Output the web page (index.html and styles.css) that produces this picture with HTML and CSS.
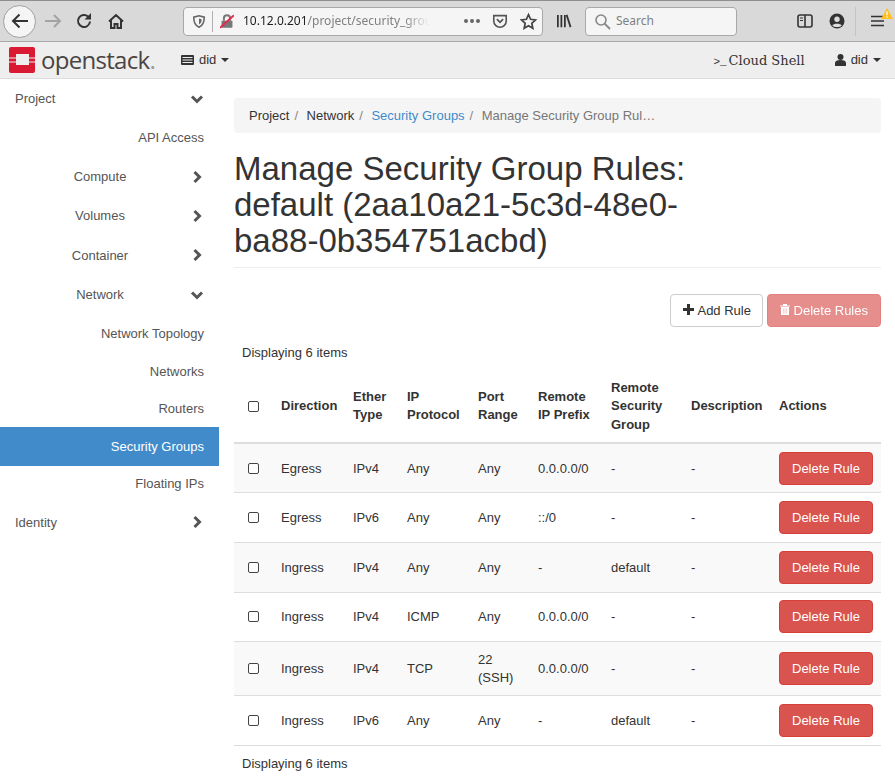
FILE: index.html
```html
<!DOCTYPE html>
<html lang="en">
<head>
    <meta charset="UTF-8">
    <meta name="viewport" content="width=device-width, initial-scale=1.0">
    <title>Manage Security Group Rules - OpenStack Dashboard</title>
    <link rel="stylesheet" href="styles.css">
</head>
<body>
    <div class="browser-bar">
        <div class="back-button">
            <svg width="20" height="20" viewBox="0 0 20 20"><path d="M18 10H3M9.500 3.500 3 10l6.500 6.500" fill="none" stroke="#333" stroke-width="2"/></svg>
        </div>
        <svg class="tool forward" width="18" height="18" viewBox="0 0 18 18"><path d="M1 9h15M10 3l6 6-6 6" fill="none" stroke="#a3a3a3" stroke-width="2"/></svg>
        <svg class="tool reload" width="18" height="18" viewBox="0 0 18 18"><path d="M15 9.500A6 6 0 1 1 13 4.500" fill="none" stroke="#333" stroke-width="2"/><path d="M16 1v6.500h-6.500z" fill="#333"/></svg>
        <svg class="tool home" width="18" height="18" viewBox="0 0 18 18"><path d="M2 9.500 9 3l7 6.500M4 8v8h3.500v-4h3v4H14V8" fill="none" stroke="#333" stroke-width="2"/></svg>
        <div class="url-box">
            <svg class="shield" width="14" height="15" viewBox="0 0 16 16"><path d="M8 1.500 14 3c0 6-1.500 9.500-6 11.500C3.500 12.500 2 9 2 3z" fill="none" stroke="#666" stroke-width="1.800"/><path d="M8 4.500 11 5.300c0 3-.8 4.700-3 6z" fill="#666"/></svg>
            <span class="url-sep"></span>
            <svg class="lock" width="14" height="15" viewBox="0 0 18 18"><rect x="2" y="8" width="14" height="9" rx="1" fill="#777"/><path d="M5 8V5a4 4 0 0 1 8 0v3" fill="none" stroke="#777" stroke-width="2.500"/><path d="M0 17 18 1" stroke="#e8274b" stroke-width="2.500"/></svg>
            <span class="url-text"><span class="url-host">10.12.0.201</span>/project/security_grou</span>
            <svg class="url-dots" width="16" height="4" viewBox="0 0 16 4"><circle cx="2" cy="2" r="2" fill="#666"/><circle cx="8" cy="2" r="2" fill="#666"/><circle cx="14" cy="2" r="2" fill="#666"/></svg>
            <svg class="pocket" width="16" height="16" viewBox="0 0 18 18"><path d="M2 3h14v6a7 7 0 0 1-14 0z" fill="none" stroke="#555" stroke-width="1.800"/><path d="M5.500 7 9 10.500 12.500 7" fill="none" stroke="#555" stroke-width="2"/></svg>
            <svg class="star" width="17" height="17" viewBox="0 0 18 18"><path d="M9 1.800 11.200 6.700l5.300.6-4 3.600 1.100 5.300L9 13.500l-4.600 2.700 1.100-5.300-4-3.600 5.300-.6z" fill="none" stroke="#444" stroke-width="1.800"/></svg>
        </div>
        <svg class="library" width="16" height="14" viewBox="0 0 17 16"><path d="M1.500 1v14M5.500 1v14M9.500 1v14M11.500 1l4.500 14" fill="none" stroke="#333" stroke-width="2"/></svg>
        <div class="search-box">
            <svg width="17" height="17" viewBox="0 0 17 17"><circle cx="7" cy="7" r="5" fill="none" stroke="#888" stroke-width="1.600"/><path d="m10.500 10.500 5.500 5.500" stroke="#888" stroke-width="1.800"/></svg>
            <span>Search</span>
        </div>
        <svg class="sidebar-toggle" width="16" height="14" viewBox="0 0 16 14"><rect x="1" y="1" width="14" height="12" rx="2" fill="none" stroke="#333" stroke-width="1.600"/><path d="M8 1v12" stroke="#333" stroke-width="1.600"/><path d="M3 4h3M3 6.500h3" stroke="#333"/></svg>
        <svg class="account" width="16" height="16" viewBox="0 0 16 16"><circle cx="8" cy="8" r="7.500" fill="#333"/><circle cx="8" cy="6.300" r="2.700" fill="#ddd"/><path d="M3.300 12.500c1-2.500 8.400-2.500 9.400 0C11 14.500 5 14.500 3.300 12.500z" fill="#ddd"/></svg>
        <span class="bar-sep"></span>
        <div class="menu-button">
            <svg width="13" height="12" viewBox="0 0 13 12"><path d="M0 1.500h13M0 6h13M0 10.500h13" stroke="#333" stroke-width="1.600"/></svg>
            <svg class="warn" width="12" height="11" viewBox="0 0 13 12"><path d="M6.500 0 13 12H0z" fill="#ffbf1c"/><path d="M6.500 3.500v4.500M6.500 9v1.500" stroke="#fff" stroke-width="1.400"/></svg>
        </div>
    </div>

    <nav class="topbar">
        <div class="brand">
            <svg width="26" height="26" viewBox="0 0 26 26"><path d="M2 0h22a2 2 0 0 1 2 2v8.500h-6V7H7v3.500H0V2a2 2 0 0 1 2-2zM0 11.500h7v3H0zM20 11.500h6v3h-6zM0 15.500h7V18h13v-2.500h6V24a2 2 0 0 1-2 2H2a2 2 0 0 1-2-2z" fill="#da1a32"/></svg>
            <span class="brand-name">openstack<span class="brand-dot">.</span></span>
        </div>
        <div class="project-picker">
            <svg width="13" height="10" viewBox="0 0 13 10"><rect width="13" height="10" rx="1" fill="#333"/><path d="M1.500 2.500h10M1.500 5h10M1.500 7.500h10" stroke="#eee"/></svg>
            <span>did</span>
            <span class="caret"></span>
        </div>
        <div class="cloud-shell"><span class="prompt">&gt;_</span>Cloud Shell</div>
        <div class="user-menu">
            <svg width="11" height="12" viewBox="0 0 11 12"><circle cx="5.500" cy="3" r="3" fill="#333"/><path d="M0 12V9c0-2 2-3 5.500-3S11 7 11 9v3z" fill="#333"/></svg>
            <span>did</span>
            <span class="caret"></span>
        </div>
    </nav>

    <div class="layout">
        <aside class="sidebar">
            <a class="nav-row nav-top h39">Project
                <svg class="chev" width="14" height="14" viewBox="0 0 14 14"><path d="M2 4.500l5 5 5-5" fill="none" stroke="#555" stroke-width="3"/></svg>
            </a>
            <a class="nav-row nav-link h39">API Access</a>
            <a class="nav-row nav-group h39"><span>Compute</span>
                <svg class="chev" width="14" height="14" viewBox="0 0 14 14"><path d="M4.500 2l5 5-5 5" fill="none" stroke="#555" stroke-width="3"/></svg>
            </a>
            <a class="nav-row nav-group h39"><span>Volumes</span>
                <svg class="chev" width="14" height="14" viewBox="0 0 14 14"><path d="M4.500 2l5 5-5 5" fill="none" stroke="#555" stroke-width="3"/></svg>
            </a>
            <a class="nav-row nav-group h40"><span>Container</span>
                <svg class="chev" width="14" height="14" viewBox="0 0 14 14"><path d="M4.500 2l5 5-5 5" fill="none" stroke="#555" stroke-width="3"/></svg>
            </a>
            <a class="nav-row nav-group h39"><span>Network</span>
                <svg class="chev" width="14" height="14" viewBox="0 0 14 14"><path d="M2 4.500l5 5 5-5" fill="none" stroke="#555" stroke-width="3"/></svg>
            </a>
            <a class="nav-row nav-link h39">Network Topology</a>
            <a class="nav-row nav-link h37">Networks</a>
            <a class="nav-row nav-link h37">Routers</a>
            <a class="nav-row nav-link h39 active">Security Groups</a>
            <a class="nav-row nav-link h36">Floating IPs</a>
            <a class="nav-row nav-top h40">Identity
                <svg class="chev" width="14" height="14" viewBox="0 0 14 14"><path d="M4.500 2l5 5-5 5" fill="none" stroke="#555" stroke-width="3"/></svg>
            </a>
        </aside>

        <main class="content">
            <ol class="breadcrumb">
                <li>Project</li>
                <li>Network</li>
                <li class="crumb-link">Security Groups</li>
                <li class="crumb-current">Manage Security Group Rul…</li>
            </ol>
            <h1 class="page-title">Manage Security Group Rules: default (2aa10a21-5c3d-48e0-ba88-0b354751acbd)</h1>

            <div class="table-actions">
                <button class="btn btn-default">
                    <svg width="11" height="11" viewBox="0 0 11 11"><path d="M4 0h3v4h4v3H7v4H4V7H0V4h4z" fill="#333"/></svg>
                    Add Rule
                </button>
                <button class="btn btn-danger btn-disabled">
                    <svg width="10" height="11" viewBox="0 0 10 11"><path d="M0 1.500h10v1H0zM3 0h4v1.500H3zM1 3h8v8H1z" fill="#fff"/><path d="M3.500 4.500v5M5 4.500v5M6.500 4.500v5" stroke="#e68a87" stroke-width=".6"/></svg>
                    Delete Rules
                </button>
            </div>

            <table class="rules">
                <colgroup>
                    <col class="col-check">
                    <col class="col-dir">
                    <col class="col-ether">
                    <col class="col-proto">
                    <col class="col-port">
                    <col class="col-prefix">
                    <col class="col-group">
                    <col class="col-desc">
                    <col class="col-act">
                </colgroup>
                <thead>
                    <tr class="count-row"><td colspan="9">Displaying 6 items</td></tr>
                    <tr class="head-row">
                        <th><span class="check"></span></th>
                        <th>Direction</th>
                        <th>Ether Type</th>
                        <th>IP Protocol</th>
                        <th>Port Range</th>
                        <th>Remote IP Prefix</th>
                        <th>Remote Security Group</th>
                        <th>Description</th>
                        <th>Actions</th>
                    </tr>
                </thead>
                <tbody>
                    <tr class="r49"><td><span class="check"></span></td><td>Egress</td><td>IPv4</td><td>Any</td><td>Any</td><td>0.0.0.0/0</td><td>-</td><td>-</td><td><button class="btn btn-danger">Delete Rule</button></td></tr>
                    <tr class="r50"><td><span class="check"></span></td><td>Egress</td><td>IPv6</td><td>Any</td><td>Any</td><td>::/0</td><td>-</td><td>-</td><td><button class="btn btn-danger">Delete Rule</button></td></tr>
                    <tr class="r50"><td><span class="check"></span></td><td>Ingress</td><td>IPv4</td><td>Any</td><td>Any</td><td>-</td><td>default</td><td>-</td><td><button class="btn btn-danger">Delete Rule</button></td></tr>
                    <tr class="r49"><td><span class="check"></span></td><td>Ingress</td><td>IPv4</td><td>ICMP</td><td>Any</td><td>0.0.0.0/0</td><td>-</td><td>-</td><td><button class="btn btn-danger">Delete Rule</button></td></tr>
                    <tr class="r54"><td><span class="check"></span></td><td>Ingress</td><td>IPv4</td><td>TCP</td><td>22 (SSH)</td><td>0.0.0.0/0</td><td>-</td><td>-</td><td><button class="btn btn-danger">Delete Rule</button></td></tr>
                    <tr class="r50"><td><span class="check"></span></td><td>Ingress</td><td>IPv6</td><td>Any</td><td>Any</td><td>-</td><td>default</td><td>-</td><td><button class="btn btn-danger">Delete Rule</button></td></tr>
                </tbody>
                <tfoot>
                    <tr class="count-row"><td colspan="9">Displaying 6 items</td></tr>
                </tfoot>
            </table>
        </main>
    </div>
</body>
</html>
```

FILE: styles.css
```css
:root {
    --text-color: #333;
    --muted-color: #555;
    --danger-color: #d9534f;
    --link-color: #428bca;
}

html, body {
    height: 779px;
    overflow: hidden;
}

body {
    margin: 0;
    font-family: 'Liberation Sans', Arial, sans-serif;
    font-size: 13px;
    line-height: 1.42857;
    color: var(--text-color);
    background: #fff;
}

/* browser toolbar */
.browser-bar {
    height: 42px;
    box-sizing: border-box;
    display: flex;
    align-items: center;
    background: #d9d9d9;
    border-top: 1px solid #8f8f8f;
    border-bottom: 1px solid #a8a8a8;
    font-family: 'Noto Sans', sans-serif;
}

.back-button {
    width: 31px;
    height: 31px;
    margin-left: 3px;
    display: flex;
    align-items: center;
    justify-content: center;
    background: #f5f5f5;
    border: 1px solid #a0a0a0;
    border-radius: 50%;
}

.tool {
    flex: none;
}

.forward {
    margin-left: 8px;
}

.reload {
    margin-left: 13px;
}

.home {
    margin-left: 14px;
}

.url-box {
    width: 360px;
    height: 29px;
    margin-left: 58px;
    flex: none;
    box-sizing: border-box;
    display: flex;
    align-items: center;
    background: #f5f5f5;
    border: 1px solid #a8a8a8;
    border-radius: 4px;
    font-size: 12px;
}

.shield {
    margin-left: 8px;
}

.url-sep {
    width: 1px;
    height: 21px;
    margin-left: 6px;
    background: #b0b0b0;
}

.lock {
    margin-left: 7px;
}

.url-text {
    width: 192px;
    margin-left: 9px;
    white-space: nowrap;
    color: #808080;
    -webkit-mask-image: linear-gradient(to right, #000 84%, transparent 97%);
    mask-image: linear-gradient(to right, #000 84%, transparent 97%);
}

.url-host {
    color: #222;
}

.url-dots {
    margin-left: 29px;
}

.pocket {
    margin-left: 12px;
}

.star {
    margin-left: 12px;
}

.library {
    margin-left: 13px;
    flex: none;
}

.search-box {
    width: 152px;
    height: 29px;
    margin-left: 13px;
    flex: none;
    box-sizing: border-box;
    display: flex;
    align-items: center;
    gap: 5px;
    padding-left: 8px;
    background: #f5f5f5;
    border: 1px solid #a8a8a8;
    border-radius: 4px;
    font-size: 12px;
    color: #808080;
}

.sidebar-toggle {
    margin-left: 60px;
    flex: none;
}

.account {
    margin-left: 16px;
    flex: none;
}

.bar-sep {
    width: 1px;
    height: 29px;
    margin-left: 10px;
    background: #c4c4c4;
}

.menu-button {
    position: relative;
    margin-left: 15px;
    display: flex;
}

.warn {
    position: absolute;
    top: -7px;
    left: 10px;
}

/* openstack navbar */
.topbar {
    height: 37px;
    box-sizing: border-box;
    display: flex;
    align-items: center;
    background: #eee;
    border-bottom: 1px solid #ddd;
}

.brand {
    display: flex;
    align-items: center;
    margin-left: 9px;
    width: 172px;
    flex: none;
}

.brand-name {
    margin-left: 6px;
    font-family: 'Open Sans', sans-serif;
    font-size: 24px;
    font-weight: 500;
    line-height: 26px;
    letter-spacing: -0.7px;
    color: #4a4443;
}

.brand-dot {
    color: #999;
}

.project-picker, .user-menu {
    display: flex;
    align-items: center;
    gap: 5px;
}

.caret {
    width: 0;
    height: 0;
    border-top: 4px solid #333;
    border-left: 4px solid transparent;
    border-right: 4px solid transparent;
}

.cloud-shell {
    margin-left: auto;
    margin-top: 2px;
    font-family: 'DejaVu Serif', 'Liberation Serif', serif;
    font-size: 13px;
    color: #333;
}

.prompt {
    margin-right: 2px;
    font-family: 'Liberation Mono', monospace;
    font-size: 11px;
}

.user-menu {
    margin-left: 30px;
    margin-right: 14px;
}

/* sidebar */
.layout {
    display: flex;
}

.sidebar {
    width: 219px;
    flex: none;
}

.nav-row {
    display: flex;
    align-items: center;
    justify-content: flex-end;
    box-sizing: border-box;
    padding-top: 2px;
    padding-right: 15px;
    color: var(--muted-color);
}

.h36 { height: 36px; padding-top: 0; }
.h37 { height: 37px; }
.h39 { height: 39px; }
.h40 { height: 40px; }

.nav-top {
    justify-content: space-between;
    padding-left: 15px;
}

.nav-group span {
    width: 110px;
    text-align: center;
    margin-right: 27px;
}

.chev {
    flex: none;
    margin-top: -2px;
}

.nav-group .chev {
    margin-left: 8px;
}

.active {
    background: var(--link-color);
    color: #fff;
}

/* main content */
.content {
    flex: 1;
    min-width: 0;
    padding: 19px 14px 0 15px;
}

.breadcrumb {
    display: flex;
    margin: 0;
    padding: 9px 15px 7px;
    height: 35px;
    box-sizing: border-box;
    list-style: none;
    align-items: center;
    background: #f5f5f5;
    border-radius: 4px;
}

.breadcrumb li + li::before {
    content: "/";
    padding: 0 8.500px 0 5px;
    color: #888;
}

.crumb-link {
    color: var(--link-color);
}

.crumb-current {
    color: #777;
}

.page-title {
    margin: 18px 0 0;
    padding: 0 147px 8px 0;
    border-bottom: 1px solid #eee;
    font-size: 33px;
    font-weight: 400;
    line-height: 36px;
    color: var(--text-color);
}

.table-actions {
    display: flex;
    justify-content: flex-end;
    gap: 4px;
    margin-top: 26px;
}

.btn {
    height: 33px;
    padding: 0 12px;
    box-sizing: border-box;
    font-family: inherit;
    font-size: 13px;
    white-space: nowrap;
    border: 1px solid transparent;
    border-radius: 4px;
}

.btn-default {
    padding-right: 11px;
    background: #fff;
    border-color: #ccc;
    color: var(--text-color);
}

.btn-default svg {
    margin-right: 1px;
}

.btn-danger {
    background: var(--danger-color);
    border-color: #d43f3a;
    color: #fff;
}

.btn-disabled {
    opacity: .65;
}

.rules {
    width: 647px;
    margin-top: 9px;
    table-layout: fixed;
    border-collapse: collapse;
}

.rules td, .rules th {
    padding: 8px;
    text-align: left;
    vertical-align: middle;
}

.head-row th {
    font-weight: 700;
    border-bottom: 2px solid #ddd;
}

.col-check { width: 39px; }
.col-dir { width: 72px; }
.col-ether { width: 54px; }
.col-proto { width: 71px; }
.col-port { width: 60px; }
.col-prefix { width: 73px; }
.col-group { width: 80px; }
.col-desc { width: 88px; }
.col-act { width: 110px; }

.rules .head-row th:first-child, .rules tbody td:first-child {
    padding-left: 14px;
}

.rules tbody td {
    border-bottom: 1px solid #ddd;
    padding-top: 8px;
    padding-bottom: 6px;
}

.rules tbody td:first-child, .rules tbody td:last-child {
    padding-top: 7px;
    padding-bottom: 7px;
}

.rules tfoot td {
    padding-top: 9px;
}

.rules tbody tr:nth-child(odd) {
    background: #f9f9f9;
}

.r49 { height: 49px; }
.r50 { height: 50px; }
.r54 { height: 54px; }

.check {
    display: block;
    width: 11px;
    height: 11px;
    box-sizing: border-box;
    background: #fff;
    border: 1px solid #444;
    border-radius: 2px;
}
```
